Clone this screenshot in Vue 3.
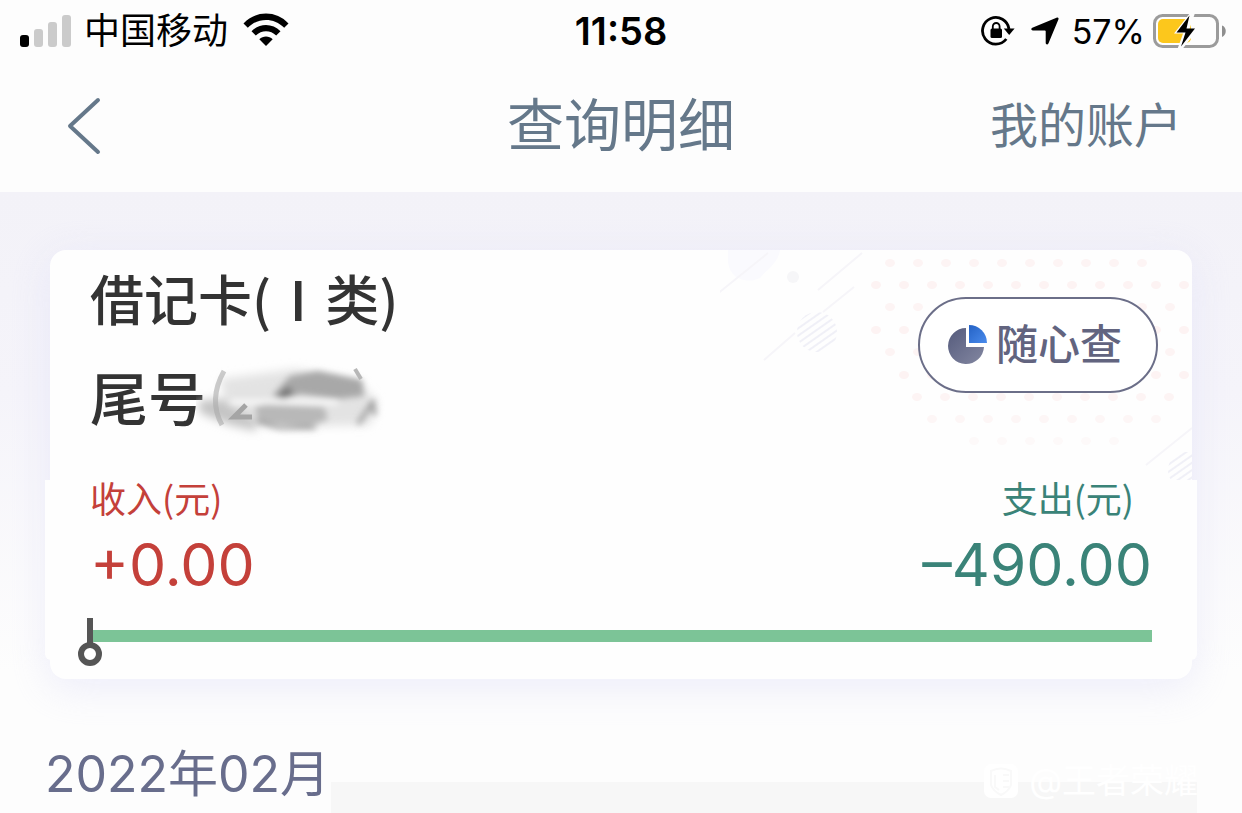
<template>
  <div class="page">
    <header class="top">
      <div class="status-bar">
        <div class="status-left">
          <svg class="signal" width="52" height="34" viewBox="0 0 52 34" aria-hidden="true">
            <rect x="0" y="21" width="9" height="12" rx="3" fill="#000" />
            <rect x="14" y="15" width="9" height="18" rx="3" fill="#cbcbcb" />
            <rect x="28" y="8" width="9" height="25" rx="3" fill="#cbcbcb" />
            <rect x="42" y="1" width="9" height="32" rx="3" fill="#cbcbcb" />
          </svg>
          <span class="carrier">中国移动</span>
          <svg class="wifi" width="46" height="36" viewBox="0 0 46 36" aria-hidden="true">
            <path d="M0.5 10.5C12.5 -2.8 33.5 -2.8 45.500 10.5L41.200 14.800C31 4.300 15 4.300 4.800 14.800Z" />
            <path d="M8.500 18.300C16.500 10 29.500 10 37.500 18.300L33.200 22.500C27.500 16.800 18.500 16.800 12.800 22.500Z" />
            <path d="M16.300 26.200C20 22.700 26 22.700 29.700 26.200L23 33Z" />
          </svg>
        </div>
        <span class="clock">11:58</span>
        <div class="status-right">
          <svg width="34" height="32" viewBox="0 0 34 32" aria-hidden="true">
            <path d="M28 14A13.300 13.300 0 1 0 25.300 24" fill="none" stroke="#000" stroke-width="2.800" />
            <path d="M22.800 13.500H33.600L28.200 20Z" />
            <rect x="9.500" y="13.500" width="11.500" height="9.500" rx="1.500" />
            <path d="M11.800 14V11.400A3.400 3.400 0 0 1 18.600 11.400V14" fill="none" stroke="#000" stroke-width="1.800" />
          </svg>
          <svg class="arrow" width="30" height="30" viewBox="0 0 30 30" aria-hidden="true">
            <path d="M26.500 1.700C28 1 29 2 28.400 3.500L18.400 27.500C17.700 29 15.700 28.600 15.700 27V15.300C15.700 14.700 15.400 14.400 14.800 14.400H2.800C1 14.400 0.700 12.500 2.300 11.800Z" />
          </svg>
          <span class="percent">57%</span>
          <svg class="battery" width="74" height="36" viewBox="0 0 74 36" aria-hidden="true">
            <rect x="1.500" y="2.500" width="63" height="31" rx="8" fill="none" stroke="#9b9b9b" stroke-width="3" />
            <path d="M69 12.500C74 14 74 22 69 24Z" fill="#8f8f8f" />
            <rect x="5" y="6" width="33" height="24" rx="5" fill="#fcc71c" />
            <path d="M37 0L21 20.500H30L24.500 36H29.500L45 16H36.500L42 0Z" fill="#fdfdfd" />
            <path d="M36.500 2.500L23.500 19.500H32.500L28 33.500L42 15.500H33.500Z" />
          </svg>
        </div>
      </div>
      <nav class="nav">
        <button class="back" type="button" aria-label="返回">
          <svg width="34" height="58" viewBox="0 0 34 58" aria-hidden="true">
            <path d="M31 3L3 29L31 55" fill="none" stroke="#65788a" stroke-width="4" stroke-linecap="round" stroke-linejoin="round" />
          </svg>
        </button>
        <h1 class="title">查询明细</h1>
        <a class="account-link" href="#">我的账户</a>
      </nav>
    </header>

    <main class="content">
      <section class="card">
        <svg class="decor" width="472" height="230" viewBox="0 0 472 230" aria-hidden="true">
          <defs>
            <pattern id="hatch" width="6" height="6" patternUnits="userSpaceOnUse" patternTransform="rotate(55)">
              <rect width="2" height="6" fill="#f0f0f7" />
            </pattern>
          </defs>
          <path d="M8 0H60C58 14 46 20 40 28C28 34 10 30 8 12Z" fill="#fafafe" />
          <g stroke="#f6f5f9" stroke-width="2">
            <path d="M-4 45L48 3M98 40L142 3M44 110L75 83M103 62L134 37M426 215L472 178" />
          </g>
          <circle cx="73" cy="27" r="6" fill="#f6f6f8" />
          <circle cx="97" cy="82" r="20" fill="url(#hatch)" />
          <circle cx="466" cy="220" r="18" fill="url(#hatch)" />
          <ellipse v-for="(dot, i) in dots" :key="i" :cx="dot.x" :cy="dot.y" rx="5" ry="4" :fill="dot.fill" />
        </svg>

        <div class="card-head">
          <div>
            <h2 class="card-name">借记卡(Ⅰ类)</h2>
            <p class="card-tail">
              <span>尾号</span>
              <svg class="smudge" width="190" height="90" viewBox="0 0 190 90" aria-hidden="true">
                <defs>
                  <filter id="soft" x="-30%" y="-30%" width="160%" height="160%">
                    <feGaussianBlur stdDeviation="3" />
                  </filter>
                  <filter id="wide" x="-30%" y="-30%" width="160%" height="160%">
                    <feGaussianBlur stdDeviation="5" />
                  </filter>
                </defs>
                <g filter="url(#wide)">
                  <path d="M2 46L22 44L62 48L60 76L34 70L4 58Z" fill="#c4c4c4" />
                  <path d="M24 24L100 14L164 28L182 48L174 70L70 72L30 48Z" fill="#e3e3e3" />
                </g>
                <g filter="url(#soft)">
                  <path d="M76 41L94 21L122 16L166 25L168 41L142 44L104 39L88 44Z" fill="#a8a8a8" />
                  <path d="M81 40L92 31L98 38L87 44Z" fill="#777" />
                  <path d="M59 52L70 49L128 52L132 64L112 72L62 67Z" fill="#b8b8b8" />
                  <path d="M60 66L84 73L120 73" fill="none" stroke="#999" stroke-width="3" />
                  <path d="M178 45L162 69M176 48L179 60" fill="none" stroke="#9a9a9a" stroke-width="4" />
                  <path d="M34 47H142" stroke="#fff" stroke-width="4" />
                </g>
                <path d="M28 16C18 34 16 52 26 70" fill="none" stroke="#aaa" stroke-width="5" opacity="0.6" />
                <path d="M50 50L38 62H56" fill="none" stroke="#a5a5a5" stroke-width="5" />
                <path d="M159 14L165 24" stroke="#b7b7b7" stroke-width="4" />
              </svg>
            </p>
          </div>
          <button class="query-btn" type="button">
            <svg width="40" height="42" viewBox="0 0 40 42" aria-hidden="true">
              <defs>
                <linearGradient id="pie" x1="0" y1="0" x2="1" y2="1">
                  <stop offset="0" stop-color="#555b7c" />
                  <stop offset="1" stop-color="#8387a1" />
                </linearGradient>
                <linearGradient id="slice" x1="0" y1="0" x2="1" y2="1">
                  <stop offset="0" stop-color="#2462c5" />
                  <stop offset="1" stop-color="#4a8bec" />
                </linearGradient>
              </defs>
              <path d="M18 4A18 18 0 1 0 36 23H18Z" fill="url(#pie)" />
              <path d="M21 1A18 18 0 0 1 39 19H21Z" fill="url(#slice)" />
            </svg>
            <span class="query-text">随心查</span>
          </button>
        </div>

        <div class="summary">
          <div class="figures">
            <div class="income">
              <p class="label">收入(元)</p>
              <p class="amount">+0.00</p>
            </div>
            <div class="expense">
              <p class="label">支出(元)</p>
              <p class="amount">–490.00</p>
            </div>
          </div>
          <div class="ratio">
            <svg class="marker" width="24" height="48" viewBox="0 0 24 48" aria-hidden="true">
              <path d="M12 0V26" stroke="#555" stroke-width="6" />
              <circle cx="12" cy="36" r="9" fill="#fff" stroke="#555" stroke-width="6" />
            </svg>
          </div>
        </div>
      </section>

      <section class="month-row">
        <h3 class="month">2022年02月</h3>
        <div class="month-panel"></div>
      </section>
    </main>

    <div class="watermark">
      <svg width="36" height="36" viewBox="0 0 36 36" aria-hidden="true">
        <rect x="1" y="1" width="34" height="34" rx="7" fill="#fff" />
        <path d="M8 8Q18 3 28 8V22Q26 28 18 32Q10 28 8 22Z" fill="none" stroke="#f9f9f9" stroke-width="2" />
        <path d="M12 12V24L16 27M20 12H26M20 18H26M20 24H26" fill="none" stroke="#f9f9f9" stroke-width="2" />
      </svg>
      <span>@王者荣耀</span>
    </div>
  </div>
</template>

<script setup>
// dotted rows, the pink fades out towards the bottom
const rows = [
  { y: 13, from: 170, count: 10, fill: '#fdf4f4' },
  { y: 35, from: 156, count: 12, fill: '#fdf3f3' },
  { y: 57, from: 170, count: 11, fill: '#fdf4f4' },
  { y: 80, from: 156, count: 12, fill: '#fdf3f3' },
  { y: 102, from: 170, count: 11, fill: '#fdf4f4' },
  { y: 125, from: 184, count: 11, fill: '#fdf3f3' },
  { y: 147, from: 197, count: 10, fill: '#fdf4f4' },
  { y: 169, from: 212, count: 9, fill: '#fdf6f6' },
  { y: 191, from: 254, count: 6, fill: '#fdf9f9' }
]

const dots = rows.flatMap(({ y, from, count, fill }) =>
  Array.from({ length: count }, (_, i) => ({ x: from + i * 28, y, fill }))
)
</script>

<style>
body {
  margin: 0;
  background: #fdfdfd;
}
</style>

<style scoped>
.page {
  position: relative;
  min-height: 100vh;
  overflow: hidden;
  display: flex;
  flex-direction: column;
  font-family: Inter, "Noto Sans CJK SC", sans-serif;
  background: #fdfdfd;
}

h1,
h2,
h3,
p {
  margin: 0;
  font-weight: 400;
}

button {
  padding: 0;
  border: 0;
  background: none;
  font-family: inherit;
  cursor: pointer;
}

svg {
  display: block;
  flex-shrink: 0;
}

.top {
  background: #fdfdfd;
}

.status-bar {
  display: grid;
  grid-template-columns: 1fr auto 1fr;
  align-items: center;
  height: 62px;
  padding: 0 15px;
  font-size: 36px;
  color: #000;
}

.status-left,
.status-right {
  display: flex;
  align-items: center;
}

.status-left {
  padding-left: 5px;
}

.status-right {
  justify-content: flex-end;
}

.carrier {
  margin: 0 15px 0 12px;
  line-height: 58px;
}

.clock {
  font-size: 38px;
  font-weight: 600;
}

.percent {
  font-size: 34px;
}

.arrow {
  margin: 0 12px 0 15px;
}

.battery {
  margin-left: 8px;
}

.nav {
  display: grid;
  grid-template-columns: 1fr auto 1fr;
  align-items: center;
  height: 128px;
  padding: 0 60px 2px;
  color: #65788a;
}

.back {
  justify-self: start;
  padding-left: 7px;
}

.title {
  font-size: 57px;
  line-height: 64px;
}

.account-link {
  justify-self: end;
  font-size: 48px;
  line-height: 64px;
  color: #65788a;
  text-decoration: none;
}

.content {
  flex: 1;
  display: flex;
  flex-direction: column;
  padding: 58px 45px 0;
  background: linear-gradient(#f3f2f8 0, #f5f4fa 200px, #fdfdfd 480px);
}

.card {
  position: relative;
  margin: 0 5px;
  padding-bottom: 19px;
  border-radius: 16px;
  background: #fefefe;
  box-shadow: 0 8px 40px rgba(225, 225, 248, 0.6);
}

.decor {
  position: absolute;
  top: 0;
  right: 0;
}

.card-head {
  position: relative;
  display: flex;
  justify-content: space-between;
  height: 230px;
  padding: 0 34px 0 40px;
  box-sizing: border-box;
}

.card-name {
  font-family: "Noto Sans CJK SC", sans-serif;
  font-size: 54px;
  font-weight: 500;
  line-height: 96px;
  color: #333;
}

.card-tail {
  display: flex;
  align-items: center;
  font-size: 58px;
  font-weight: 500;
  line-height: 108px;
  color: #333;
}

.smudge {
  margin-left: -10px;
}

.query-btn {
  display: flex;
  align-items: center;
  justify-content: center;
  gap: 8px;
  width: 240px;
  height: 96px;
  margin-top: 47px;
  padding-right: 6px;
  border: 2px solid #6b6e88;
  border-radius: 48px;
  background: #fff;
  font-size: 42px;
  font-weight: 500;
  color: #62647f;
}

.query-text {
  padding-bottom: 8px;
}

.summary {
  position: relative;
  margin: 0 -5px;
  padding: 0 45px 18px;
  border-radius: 0 0 6px 6px;
  background: #fefefe;
}

.figures {
  display: flex;
  justify-content: space-between;
}

.income {
  color: #c4403a;
}

.expense {
  color: #3a8378;
  text-align: right;
}

.label {
  font-family: "Noto Sans CJK SC", sans-serif;
  font-size: 36px;
  line-height: 34px;
}

.expense .label {
  padding-right: 18px;
}

.amount {
  font-size: 59px;
  line-height: 102px;
}

.ratio {
  position: relative;
  height: 12px;
  margin-top: 14px;
  background: #7cc497;
}

.marker {
  position: absolute;
  top: -12px;
  left: -12px;
}

.month-row {
  flex: 1;
  display: flex;
  align-items: flex-end;
  gap: 1px;
}

.month {
  font-size: 50px;
  line-height: 78px;
  color: #686d8c;
}

.month-panel {
  flex: 1;
  height: 31px;
  background: #f7f7f7;
}

.watermark {
  position: absolute;
  right: 44px;
  bottom: 14px;
  display: flex;
  align-items: center;
  gap: 10px;
  font-size: 34px;
  line-height: 36px;
  color: #fff;
}
</style>
